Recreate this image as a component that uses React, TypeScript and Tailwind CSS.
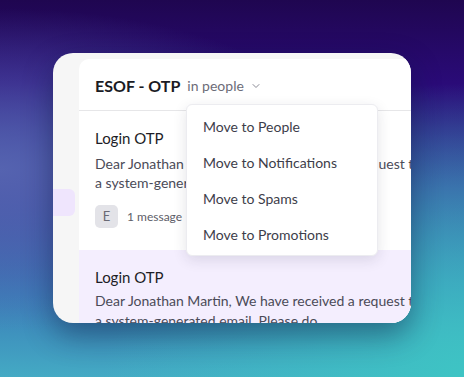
import React from "react";
import { ChevronDown } from "lucide-react";

const menuItems = [
  "Move to People",
  "Move to Notifications",
  "Move to Spams",
  "Move to Promotions",
];

export default function App() {
  return (
    <div
      className="w-[464px] h-[377px] overflow-hidden pl-[53px] pt-[53px] bg-[radial-gradient(ellipse_at_100%_100%,#3ec4c4_0%,rgba(62,196,196,0)_55%),radial-gradient(ellipse_at_0%_45%,#5563b0_0%,rgba(85,99,176,0)_55%),linear-gradient(to_bottom,#1f0650_0%,#2a0b78_22%,#3848a0_50%,#3a7db8_78%,#44aac4_100%)]"
      style={{ fontFamily: "Lato, 'Open Sans', sans-serif" }}
    >
      {/* === Card === */}
      <div className="w-[358px] h-[270px] rounded-[20px] bg-[#f6f6f6] overflow-hidden flex shadow-[0_12px_30px_rgba(10,20,60,0.45)]">
        {/* sidebar strip */}
        <div className="w-[26px] shrink-0 pt-[136px]">
          <div className="w-[22px] h-[27px] rounded-r-md bg-[#efe5fd]" />
        </div>

        {/* === Panel === */}
        <div className="relative flex-1 mt-[6px] bg-white rounded-tl-[10px] overflow-hidden">
          <div className="h-[52px] flex items-center pl-[16px] pt-[2px] border-b border-[#e6e6e8]">
            <span className="text-[16px] font-bold text-[#1b1b24]">ESOF - OTP</span>
            <span className="ml-[7px] text-[14px] text-[#6c6c78]">in people</span>
            <ChevronDown size={12} strokeWidth={2} className="ml-[6px] text-[#8a8a95]" />
          </div>

          {/* first thread */}
          <div className="pl-[16px] pt-[17px] pb-[22px] whitespace-nowrap">
            <div className="text-[15px] leading-[20px] text-[#1d1d26]">Login OTP</div>
            <div className="mt-[6px] text-[14px] leading-[19px] text-[#4b4b58]">
              <div>Dear Jonathan Martin, We have received a request to</div>
              <div>a system-generated email. Please do</div>
            </div>
            <div className="mt-[13px] flex items-center">
              <div className="w-[23px] h-[23px] rounded-[5px] bg-[#e3e3e8] flex items-center justify-center text-[13px] text-[#6a6a75]">
                E
              </div>
              <span className="ml-[9px] text-[12px] text-[#5d5d68]">1 message</span>
            </div>
          </div>

          {/* second thread */}
          <div className="bg-[#f4eefe] pl-[16px] pt-[17px] pb-[20px] whitespace-nowrap">
            <div className="text-[15px] leading-[20px] text-[#1d1d26]">Login OTP</div>
            <div className="mt-[4px] text-[14px] leading-[20px] text-[#4b4b58]">
              <div>Dear Jonathan Martin, We have received a request to</div>
              <div>a system-generated email. Please do</div>
            </div>
          </div>

          {/* === Dropdown === */}
          <div className="absolute left-[107px] top-[45px] w-[192px] py-[3px] bg-white rounded-[6px] border border-[#ececf0] shadow-[0_4px_14px_rgba(30,30,60,0.12)]">
            {menuItems.map((item) => (
              <div
                key={item}
                className="h-[36px] flex items-center pl-[16px] text-[14px] text-[#3d3d4a]"
              >
                {item}
              </div>
            ))}
          </div>
        </div>
      </div>
    </div>
  );
}
